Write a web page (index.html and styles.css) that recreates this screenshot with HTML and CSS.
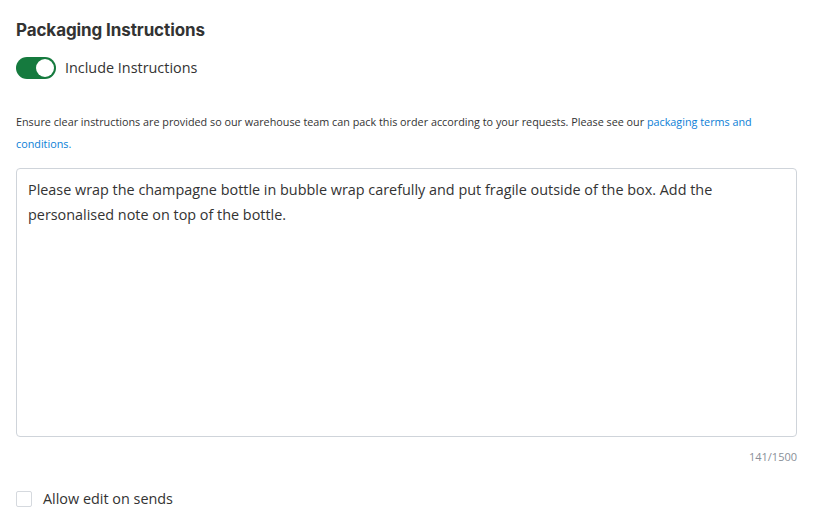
FILE: index.html
```html
<!DOCTYPE html>
<html>
<head>
<meta charset="utf-8">
<link rel="stylesheet" href="styles.css">
</head>
<body>
<div class="panel">
  <h2 class="title">Packaging Instructions</h2>
  <label class="toggle-row">
    <span class="toggle"><span class="knob"></span></span>
    <span class="toggle-label">Include Instructions</span>
  </label>
  <p class="desc">Ensure clear instructions are provided so our warehouse team can pack this order according to your requests. Please see our <a class="link" href="#">packaging terms and conditions.</a></p>
  <div class="textarea">Please wrap the champagne bottle in bubble wrap carefully and put fragile outside of the box. Add the personalised note on top of the bottle.</div>
  <div class="counter">141/1500</div>
  <label class="check-row">
    <span class="checkbox"></span>
    <span class="check-label">Allow edit on sends</span>
  </label>
</div>
</body>
</html>
```
FILE: styles.css
```css
html, body {
  margin: 0;
  padding: 0;
  background: #ffffff;
}
.panel {
  padding: 19px 20px 0 16px;
  font-family: "Open Sans", "Noto Sans", sans-serif;
  color: #333333;
}
.title {
  margin: 0;
  font-family: Inter, "Open Sans", sans-serif;
  font-weight: 700;
  font-size: 17px;
  line-height: 22px;
  color: #333333;
  letter-spacing: -0.1px;
}
.toggle-row {
  display: flex;
  align-items: center;
  gap: 9px;
  margin-top: 16px;
}
.toggle {
  width: 40px;
  height: 22px;
  border-radius: 11px;
  background: #157a3e;
  display: flex;
  align-items: center;
  justify-content: flex-end;
  padding: 0 2px;
  box-sizing: border-box;
}
.knob {
  width: 18px;
  height: 18px;
  border-radius: 50%;
  background: #ffffff;
}
.toggle-label {
  font-size: 14.4px;
  line-height: 20px;
  color: #333333;
}
.desc {
  margin: 32px 0 0 0;
  font-size: 10.8px;
  line-height: 22px;
  color: #333333;
}
.link {
  color: #0a7ed6;
  text-decoration: none;
}
.textarea {
  margin-top: 13px;
  height: 251px;
  border: 1px solid #cfd4da;
  border-radius: 4px;
  padding: 8px 11px;
  font-size: 14.4px;
  line-height: 25px;
  color: #333333;
}
.counter {
  text-align: right;
  font-size: 11px;
  color: #8a8f98;
  margin-top: 12px;
  line-height: 16px;
}
.check-row {
  display: flex;
  align-items: center;
  gap: 11px;
  margin-top: 24px;
}
.checkbox {
  width: 14px;
  height: 14px;
  border: 1px solid #d5d9de;
  border-radius: 2px;
}
.check-label {
  font-size: 14.4px;
  line-height: 20px;
  color: #333333;
}
```
